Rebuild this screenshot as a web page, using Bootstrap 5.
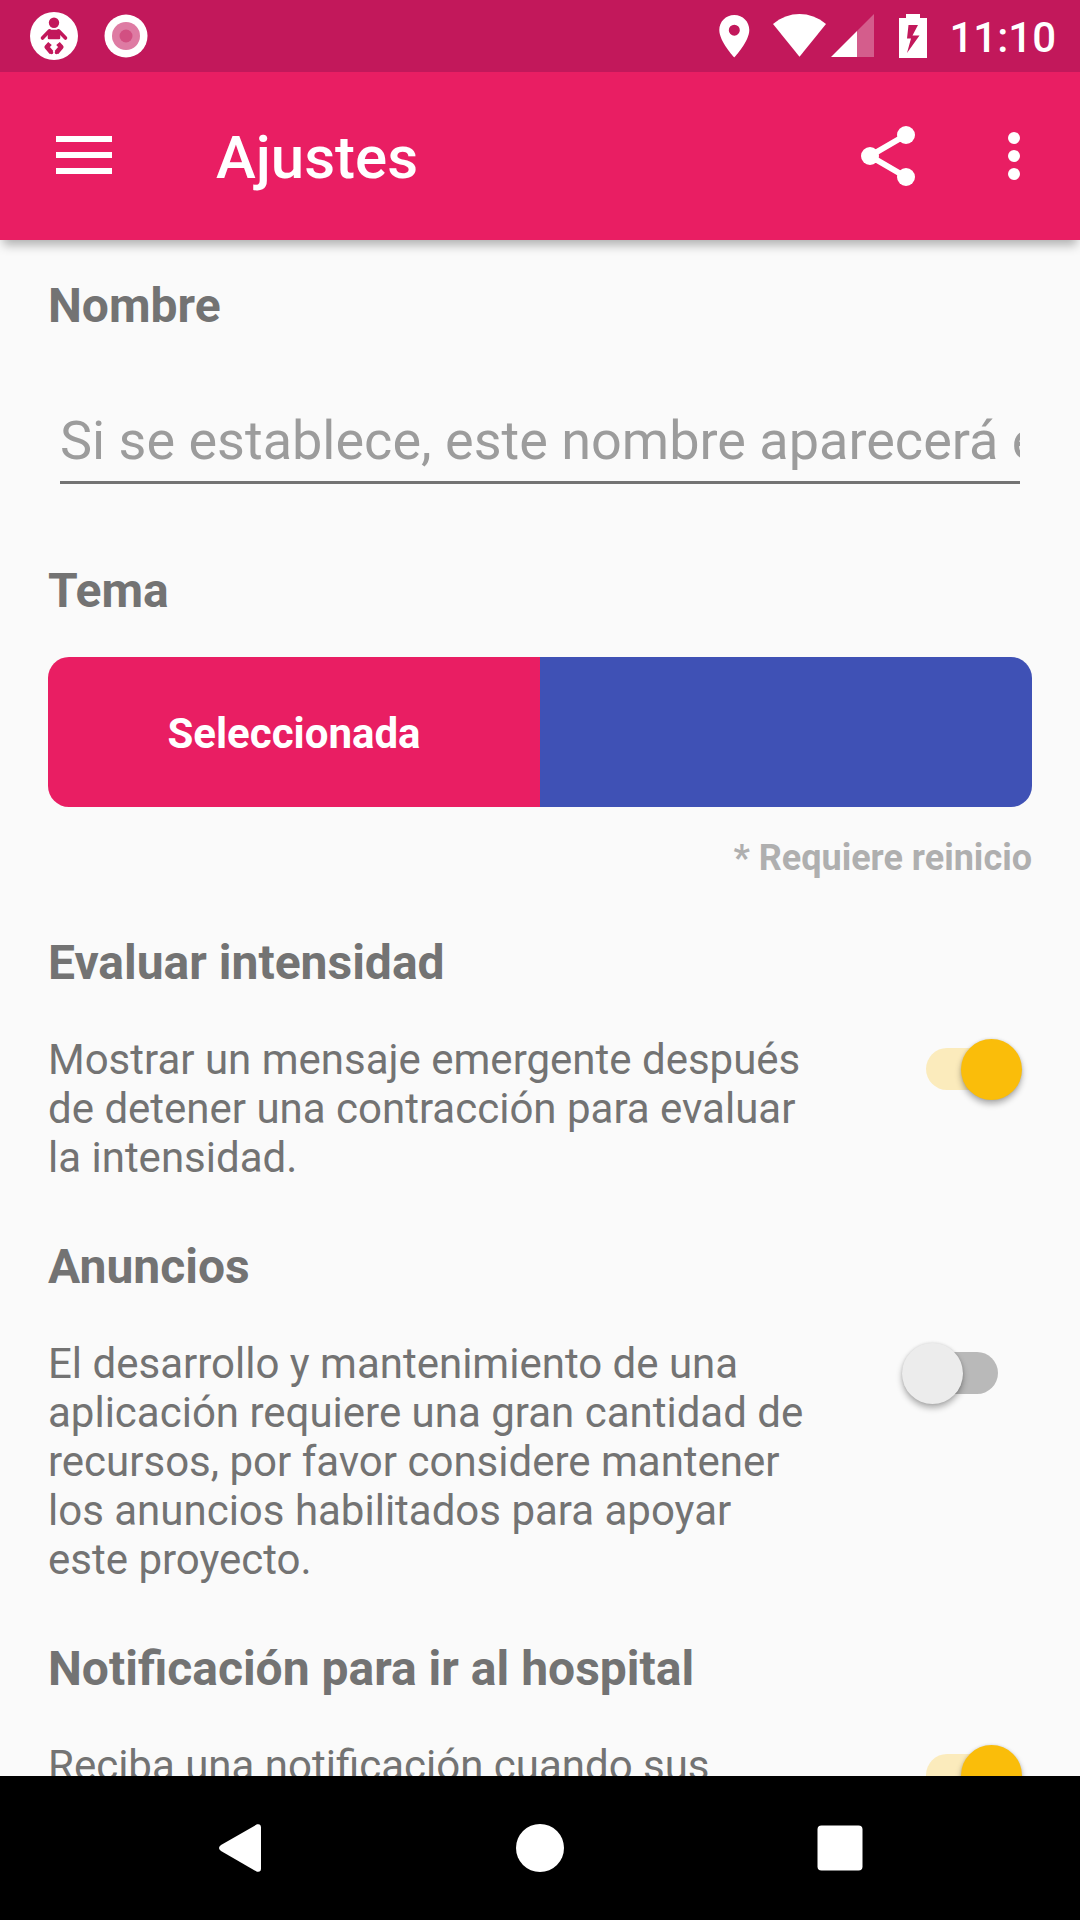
<!DOCTYPE html>
<html lang="es">
<head>
<meta charset="utf-8">
<meta name="viewport" content="width=device-width, initial-scale=1">
<title>Ajustes</title>
<link href="https://cdn.jsdelivr.net/npm/bootstrap@5.3.0/dist/css/bootstrap.min.css" rel="stylesheet">
<style>
  body { font-family: Roboto, "Noto Sans", sans-serif; background: #fafafa; color: #737373; }
  svg { display: block; flex: none; }
  .status-bar { height: 72px; padding: 0 24px 0 30px; background: #c2185b; color: #fff; }
  .clock { font-size: 42px; line-height: 48px; font-weight: 500; padding-top: 3px; margin-left: 22px; }
  .app-bar { height: 168px; padding: 0 30px 0 48px; background: #e91e63; color: #fff;
             z-index: 2; box-shadow: 0 8px 10px -3px rgba(0, 0, 0, .3); }
  .app-title { font-size: 60px; line-height: 72px; font-weight: 500; padding-top: 4px; margin-left: 96px; }
  .actions { gap: 54px; }
  .icon-btn { color: inherit; border: 0; background: none; padding: 0; }
  .settings { padding: 38px 48px 0; min-height: 0; }
  .setting-title { font-size: 48px; line-height: 56px; font-weight: 700; margin: 0; }
  .setting-text { font-size: 42px; line-height: 49px; width: 78%; margin: 0; }
  .setting { margin-bottom: 57px; }
  .theme-setting { margin-bottom: 56px; }
  .setting-row { margin-top: 44px; padding-right: 10px; }
  .name-box { margin: 76px 12px 79px; }
  .name-input { width: 100%; height: 74px; padding: 0 0 10px; border: 0; border-bottom: 3px solid #737373;
                border-radius: 0; background: none; font-size: 54px; line-height: 61px; outline: 0; }
  .name-input::placeholder { color: #9c9c9c; opacity: 1; }
  .theme-picker { height: 150px; margin-top: 38px; border-radius: 21px; }
  .theme-option { border: 0; padding: 2px 0 0; color: #fff; font-size: 42px; line-height: 49px; font-weight: 700; }
  .theme-pink { background: #e91e63; }
  .theme-indigo { background: #3f51b5; }
  .theme-note { margin: 30px 0 0; font-size: 36px; line-height: 42px; font-weight: 700; color: #afafaf; }
  .toggle { appearance: none; display: grid; flex: none; align-items: start; width: 120px; height: 61px; margin: 4px 0 0; }
  .toggle::before, .toggle::after { content: ""; grid-area: 1 / 1; }
  .toggle::before { width: 84px; height: 42px; border-radius: 21px; margin: 9px 24px 0 12px; justify-self: start; background: #b9b9b9; }
  .toggle::after { width: 61px; height: 61px; border-radius: 50%; background: #ececec; justify-self: start;
                   box-shadow: 0 4px 6px rgba(0, 0, 0, .3), 0 0 3px rgba(0, 0, 0, .12); }
  .toggle:checked::before { justify-self: end; margin: 9px 12px 0 24px; background: #fbebbc; }
  .toggle:checked::after { justify-self: end; background: #fabd0a; }
  .nav-keys { height: 144px; gap: 228px; background: #000; color: #fff; z-index: 2; }
</style>
</head>
<body>
<div class="d-flex flex-column vh-100 overflow-hidden">
  <div class="status-bar d-flex align-items-center flex-shrink-0">
    <svg width="48" height="48" viewBox="0 0 48 48" aria-hidden="true">
      <circle cx="24" cy="24" r="24" fill="#fff"/>
      <g fill="none" stroke="#c2185b" stroke-linecap="round" stroke-linejoin="round">
        <circle cx="24" cy="10.700" r="5.200" fill="#c2185b" stroke="none"/>
        <path d="M19.500 19h9l.5 2v5H19v-5z" fill="#c2185b" stroke-width="2.500"/>
        <path d="M19.500 18.800L12.500 26M28.500 18.800L35.500 26" stroke-width="3.600"/>
        <path d="M20 31.500L16.800 35L21.500 40.500M28 31.500L31.200 35L26.500 40.500" stroke-width="4.800" stroke-linecap="butt"/>
        <path d="M21.500 40.500h.01M26.500 40.500h.01" stroke-width="3.600"/>
      </g>
    </svg>
    <svg class="ms-4" width="48" height="48" viewBox="0 0 48 48" aria-hidden="true">
      <circle cx="24" cy="24" r="21.500" fill="#fff"/>
      <circle cx="24" cy="24" r="14" fill="#de7ba3"/>
      <circle cx="24" cy="24" r="6.500" fill="#d25082"/>
    </svg>
    <svg class="ms-auto" width="208" height="48" viewBox="719 12 208 48" fill="#fff" aria-hidden="true">
      <path fill-rule="evenodd" d="M734.300 15c-8.500 0-15 6.700-15 15 0 11.500 15 27.500 15 27.500s15-16 15-27.500c0-8.300-6.500-15-15-15zm0 9.700a5.500 5.500 0 1 1 0 11 5.500 5.500 0 0 1 0-11z"/>
      <path d="M773 24c16-13.300 37-13.300 53 0l-26.500 32.700z"/>
      <path d="M874 14v43h-17V31z" opacity=".3"/>
      <path d="M857 31v26h-26z"/>
      <path fill-rule="evenodd" d="M906 14h14v4h7v40h-28V18h7zM908.500 25l-1.500 13.500h4l-4 14.500 12.500-17.500h-7l5.500-10.500z"/>
    </svg>
    <span class="clock">11:10</span>
  </div>

  <header class="app-bar d-flex align-items-center flex-shrink-0 position-relative">
    <button class="icon-btn" type="button" aria-label="Menú">
      <svg width="72" height="72" viewBox="0 0 72 72" fill="currentColor"><path d="M8 16h56v6H8zM8 32h56v6H8zM8 48h56v6H8z"/></svg>
    </button>
    <h1 class="app-title mb-0">Ajustes</h1>
    <div class="actions d-flex ms-auto">
      <button class="icon-btn" type="button" aria-label="Compartir">
        <svg width="72" height="72" viewBox="0 0 24 24" fill="currentColor"><path d="M18 5L6 12l12 7" fill="none" stroke="currentColor" stroke-width="2"/><circle cx="18" cy="5" r="3"/><circle cx="6" cy="12" r="3"/><circle cx="18" cy="19" r="3"/></svg>
      </button>
      <button class="icon-btn" type="button" aria-label="Más opciones">
        <svg width="72" height="72" viewBox="0 0 24 24" fill="currentColor"><circle cx="12" cy="6" r="2"/><circle cx="12" cy="12" r="2"/><circle cx="12" cy="18" r="2"/></svg>
      </button>
    </div>
  </header>

  <main class="settings flex-grow-1 overflow-hidden">
    <section>
      <label class="setting-title d-block" for="nombre">Nombre</label>
      <div class="name-box">
        <input class="name-input d-block" id="nombre" type="text" placeholder="Si se establece, este nombre aparecerá en">
      </div>
    </section>

    <section class="theme-setting">
      <h2 class="setting-title">Tema</h2>
      <div class="theme-picker d-flex overflow-hidden" role="group" aria-label="Tema">
        <button class="theme-option theme-pink flex-fill w-50" type="button" aria-pressed="true">Seleccionada</button>
        <button class="theme-option theme-indigo flex-fill w-50" type="button" aria-label="Índigo" aria-pressed="false"></button>
      </div>
      <p class="theme-note text-end">* Requiere reinicio</p>
    </section>

    <section class="setting">
      <h2 class="setting-title">Evaluar intensidad</h2>
      <div class="setting-row d-flex justify-content-between align-items-start">
        <label class="setting-text" for="evaluar">Mostrar un mensaje emergente después de detener una contracción para evaluar la intensidad.</label>
        <input class="toggle" id="evaluar" type="checkbox" role="switch" checked>
      </div>
    </section>

    <section class="setting">
      <h2 class="setting-title">Anuncios</h2>
      <div class="setting-row d-flex justify-content-between align-items-start">
        <label class="setting-text" for="anuncios">El desarrollo y mantenimiento de una aplicación requiere una gran cantidad de recursos, por favor considere mantener los anuncios habilitados para apoyar este proyecto.</label>
        <input class="toggle" id="anuncios" type="checkbox" role="switch">
      </div>
    </section>

    <section class="setting">
      <h2 class="setting-title">Notificación para ir al hospital</h2>
      <div class="setting-row d-flex justify-content-between align-items-start">
        <label class="setting-text" for="hospital">Reciba una notificación cuando sus</label>
        <input class="toggle" id="hospital" type="checkbox" role="switch" checked>
      </div>
    </section>
  </main>

  <nav class="nav-keys d-flex justify-content-center align-items-center flex-shrink-0" aria-label="Sistema">
    <button class="icon-btn" type="button" aria-label="Atrás"><svg width="72" height="72" viewBox="0 0 72 72" fill="currentColor"><path d="M57 15.500v41q0 4-4 3.200L17 39q-4-3 0-6L53 12.300q4-.8 4 3.200z"/></svg></button>
    <button class="icon-btn" type="button" aria-label="Inicio"><svg width="72" height="72" viewBox="0 0 72 72" fill="currentColor"><circle cx="36" cy="36" r="24"/></svg></button>
    <button class="icon-btn" type="button" aria-label="Recientes"><svg width="72" height="72" viewBox="0 0 72 72" fill="currentColor"><rect x="13.500" y="13.500" width="45" height="45" rx="4"/></svg></button>
  </nav>
</div>
<script src="https://cdn.jsdelivr.net/npm/bootstrap@5.3.0/dist/js/bootstrap.bundle.min.js"></script>
</body>
</html>
